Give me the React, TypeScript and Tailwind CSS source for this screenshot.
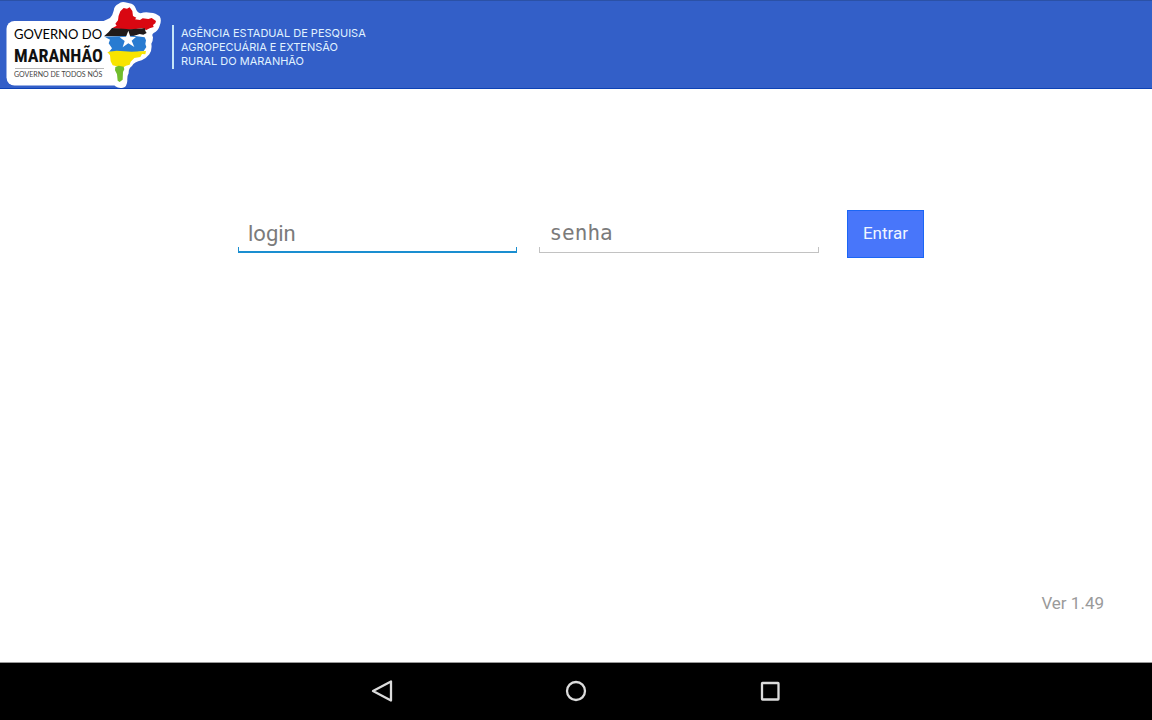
import type { InputHTMLAttributes } from 'react';

function StateLogo() {
  return (
    <svg
      role="img"
      aria-label="Governo do Maranhão"
      viewBox="0 0 168 88"
      className="h-[88px] w-[168px] shrink-0"
    >
      <rect x="6.5" y="21" width="120" height="64.5" rx="8" fill="#fff" />
      <svg x="90" y="0" width="80" height="92" viewBox="0 0 240 276">
        <path
          d="M34 66 Q46 61 60 54 Q68 46 71 32 Q73 17 85 12 Q94 4 105 7 L118 10 Q132 12 137 25 Q141 39 152 40 Q165 34 181 38 Q198 39 209 49 Q216 60 209 77 Q205 92 191 99 Q184 103 189 112 Q189 124 184 131 Q187 151 178 163 Q170 174 155 181 Q132 186 126 198 Q115 206 116 220 Q111 228 112 242 Q111 260 99 263 Q86 266 76 259 Q69 253 70 240 L66 228 L30 228 Z"
          fill="#fff"
        />
        <path
          d="M66 85 L80 77 L76 71 L84 61 Q85 46 91 34 L101 24 L111 26 L119 22 L127 33 L129 48 L139 53 L135 58 L150 60 L158 55 L175 57 L185 54 L198 63 L196 70 L189 75 L191 81 L179 85 L169 90 L156 85 L120 89 Z"
          fill="#d90711"
        />
        <path
          d="M66 84 L120 88 L165 85 L166 93 L170 99 L160 104 L149 102 L128 109 L42 109 L56 96 Z"
          fill="#211b1b"
        />
        <path
          d="M44 110 L130 107 L164 112 L168 121 L166 132 L169 141 L161 153 L128 158 L57 155 L66 145 L56 130 L60 119 Z"
          fill="#287bd1"
        />
        <path
          d="M52 156 L80 152 L125 155 L168 153 L166 163 L156 162 L151 171 L133 174 L122 185 L119 194 L108 197 L98 203 L68 196 L62 184 L60 166 Z"
          fill="#f8e400"
        />
        <path
          d="M76 201 L86 197 L101 200 L103 208 L99 216 L98 239 L89 246 L83 242 L81 223 L75 211 Z"
          fill="#71bd2c"
        />
        <path
          d="M115 92 L121 110 L138 111 L125 122 L133 141 L115 130 L98 142 L104 123 L89 112 L108 110 Z"
          fill="#fff"
        />
      </svg>
      <text x="14" y="39" className="fill-black font-['Lato',sans-serif] text-[13px]">
        GOVERNO DO
      </text>
      <text
        x="14"
        y="62"
        className="fill-[#111] font-['Roboto_Condensed','Liberation_Sans_Narrow',sans-serif] text-[18px] font-bold"
      >
        MARANHÃO
      </text>
      <path d="M15 68.5 H104" stroke="#999" strokeWidth="0.7" />
      <text x="14" y="77" className="fill-[#444] font-['Lato',sans-serif] text-[7px]">
        GOVERNO DE TODOS NÓS
      </text>
    </svg>
  );
}

type FieldProps = InputHTMLAttributes<HTMLInputElement> & {
  fontClass: string;
  lineClass: string;
};

function Field({ fontClass, lineClass, ...props }: FieldProps) {
  return (
    <label className="flex min-w-0 flex-1 flex-col">
      <input
        {...props}
        aria-label={props.placeholder}
        className={`h-8 w-full bg-transparent px-[10px] pt-1 text-[#333] outline-none placeholder:text-[#7b7b7b] ${fontClass}`}
      />
      <span className={`h-[6px] w-full ${lineClass}`} />
    </label>
  );
}

export default function App() {
  return (
    <div className="flex min-h-screen flex-col bg-white font-['Roboto',sans-serif]">
      <header className="flex items-center border-t border-b border-t-[#2b51a6] border-b-[#0d42b5] bg-[#335fc8]">
        <div className="-mt-px flex items-center">
          <StateLogo />
          <p className="mt-[6px] ml-1 border-l-2 border-[#c5e5f7] py-px pl-[7px] font-['Inter',sans-serif] text-[11px] leading-[14px] text-[#e0f2ff]">
            AGÊNCIA ESTADUAL DE PESQUISA
            <br />
            AGROPECUÁRIA E EXTENSÃO
            <br />
            RURAL DO MARANHÃO
          </p>
        </div>
      </header>

      <main className="flex flex-1 flex-col justify-between pt-[121px] pb-12">
        <form className="flex w-full justify-center pl-[10px]" onSubmit={(e) => e.preventDefault()}>
          <div className="flex w-full max-w-[686px] items-center">
            <div className="flex flex-1 gap-[22px]">
              <Field
                type="text"
                name="login"
                placeholder="login"
                fontClass="text-[22px]"
                lineClass="border-x border-b-2 border-[#1a8ed0]"
              />
              <Field
                type="password"
                name="senha"
                placeholder="senha"
                fontClass="font-['DejaVu_Sans_Mono',monospace] text-[21px]"
                lineClass="border-x border-b border-[#c2c2c2]"
              />
            </div>
            <button
              type="submit"
              className="ml-7 h-12 border border-[#1b66f5] bg-[#4876fa] px-[15px] text-[17px] text-[#f0f5ff]"
            >
              Entrar
            </button>
          </div>
        </form>
        <p className="pr-12 text-right text-[17px] leading-[22px] text-[#9a9a9a]">Ver 1.49</p>
      </main>

      <nav className="flex h-[58px] items-center justify-center gap-[170px] border-t border-[#999] bg-black pb-[2px] text-[#dcdcdc]">
        <button type="button" aria-label="Back">
          <svg viewBox="0 0 24 24" className="size-6" fill="none" stroke="currentColor" strokeWidth="2.3">
            <path d="M21 2.5 V21.5 L3 12 Z" strokeLinejoin="round" />
          </svg>
        </button>
        <button type="button" aria-label="Home">
          <svg viewBox="0 0 24 24" className="size-6" fill="none" stroke="currentColor" strokeWidth="2.3">
            <circle cx="12" cy="12" r="9" />
          </svg>
        </button>
        <button type="button" aria-label="Recents">
          <svg viewBox="0 0 24 24" className="size-6" fill="none" stroke="currentColor" strokeWidth="2.3">
            <rect x="4" y="4" width="16.5" height="16.5" rx="0.5" />
          </svg>
        </button>
      </nav>
    </div>
  );
}
